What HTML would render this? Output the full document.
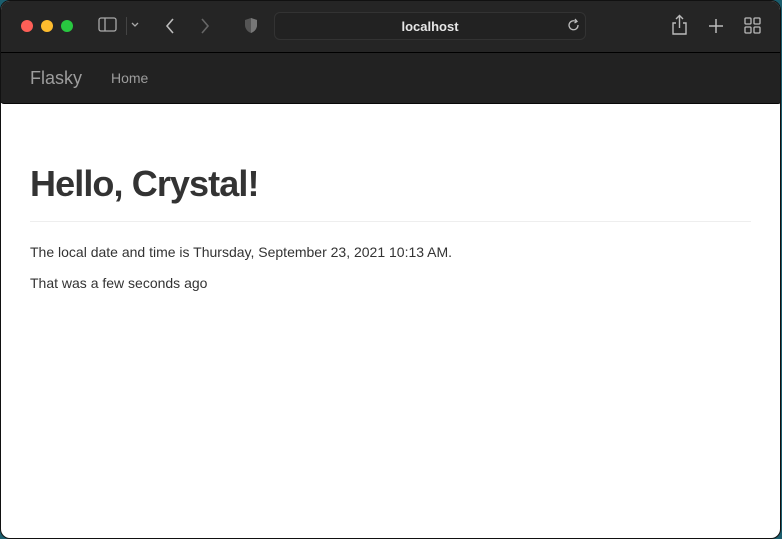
<!DOCTYPE html>
<html><head><style>
*{margin:0;padding:0;box-sizing:border-box}
body{width:782px;height:539px;background:#1b5e6e;overflow:hidden;font-family:"Liberation Sans",Helvetica,Arial,sans-serif;position:relative}
.win{position:absolute;left:0;top:0;width:781px;height:539px;background:#fff;border:1px solid #111;border-radius:10px;overflow:hidden}
.tb{position:absolute;left:-1px;top:-1px;width:782px;height:53px;background:#252525;border-bottom:1px solid #000}
.dot{position:absolute;top:20px;width:12px;height:12px;border-radius:50%}
.url{position:absolute;left:274px;top:12px;width:312px;height:28px;border:1px solid #333;border-radius:6px;background:#222;color:#e6e6e6;font-size:13px;font-weight:bold;text-align:center;line-height:27px}
.nav{position:absolute;left:-1px;top:52px;width:782px;height:51px;background:#222;border-bottom:1px solid #080808;border-radius:0 0 4px 4px}
.brand{position:absolute;left:30px;top:15px;font-size:18px;color:#9d9d9d}
.home{position:absolute;left:111px;top:17px;font-size:14px;color:#9d9d9d}
h1{position:absolute;left:29px;top:162px;font-size:36px;font-weight:bold;color:#333;letter-spacing:-0.9px}
.hr{position:absolute;left:29px;top:220px;width:721px;height:1px;background:#eee}
p{position:absolute;left:29px;font-size:14px;color:#333}
svg{position:absolute}
</style></head><body>
<div class="win">
<div class="tb">
<div class="dot" style="left:21px;background:#fe5f57"></div>
<div class="dot" style="left:41px;background:#febc2e"></div>
<div class="dot" style="left:61px;background:#28c840"></div>
<svg style="left:98px;top:17px" width="20" height="16"><rect x="1" y="1" width="17" height="13" rx="2" fill="none" stroke="#aaa" stroke-width="1.3"/><line x1="7" y1="1" x2="7" y2="14" stroke="#aaa" stroke-width="1.3"/></svg>
<div style="position:absolute;left:126px;top:17px;width:1px;height:18px;background:#444"></div>
<svg style="left:131px;top:22px" width="8" height="6"><path d="M1 1l3 3 3-3" fill="none" stroke="#aaa" stroke-width="1.3"/></svg>
<svg style="left:164px;top:17px" width="12" height="18"><path d="M9 2L3 9l6 7" fill="none" stroke="#bbb" stroke-width="1.6"/></svg>
<svg style="left:199px;top:17px" width="12" height="18"><path d="M3 2l6 7-6 7" fill="none" stroke="#666" stroke-width="1.6"/></svg>
<svg style="left:244px;top:17px" width="14" height="18"><path d="M7 1L1 3v5c0 4 3 7 6 8 3-1 6-4 6-8V3z" fill="#555"/><path d="M7 1v15c3-1 6-4 6-8V3z" fill="#777"/></svg>
<div class="url">localhost</div>
<svg style="left:567px;top:18px" width="14" height="16"><path d="M11 7a4.5 4.5 0 1 1-2-3.5" fill="none" stroke="#bbb" stroke-width="1.3"/><path d="M8 1l2 2.5-2.5 1.5" fill="none" stroke="#bbb" stroke-width="1.3"/></svg>
<svg style="left:671px;top:14px" width="18" height="22"><path d="M5 9H2v11h13V9h-3M8.5 14V2M5 5l3.5-3.5L12 5" fill="none" stroke="#bbb" stroke-width="1.4"/></svg>
<svg style="left:708px;top:18px" width="16" height="16"><path d="M8 1v14M1 8h14" stroke="#bbb" stroke-width="1.5"/></svg>
<svg style="left:744px;top:17px" width="18" height="18"><g fill="none" stroke="#bbb" stroke-width="1.3"><rect x="1" y="1" width="6" height="6" rx="1"/><rect x="10" y="1" width="6" height="6" rx="1"/><rect x="1" y="10" width="6" height="6" rx="1"/><rect x="10" y="10" width="6" height="6" rx="1"/></g></svg>
</div>
<div class="nav"><span class="brand">Flasky</span><span class="home">Home</span></div>
<h1>Hello, Crystal!</h1>
<div class="hr"></div>
<p style="top:243px">The local date and time is Thursday, September 23, 2021 10:13 AM.</p>
<p style="top:274px">That was a few seconds ago</p>
</div>
</body></html>
